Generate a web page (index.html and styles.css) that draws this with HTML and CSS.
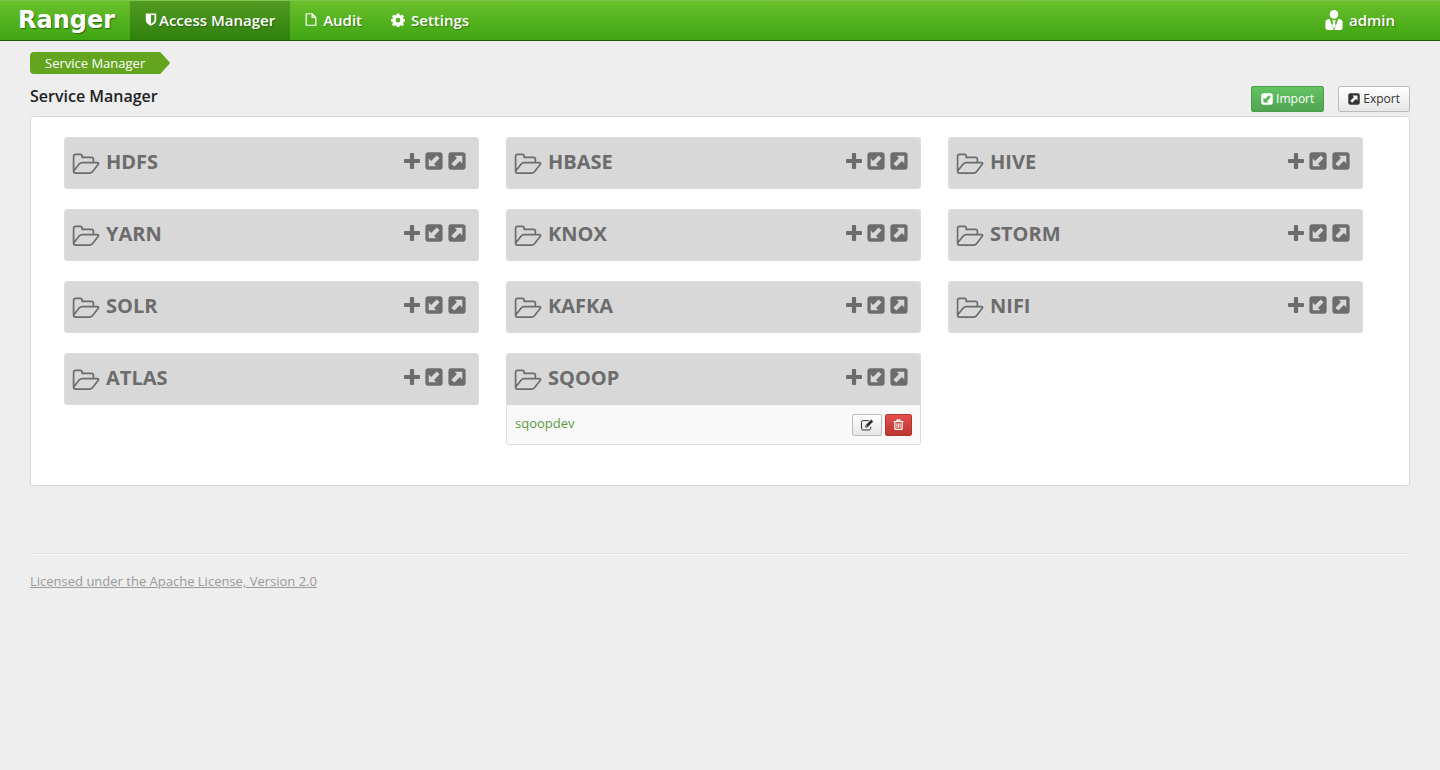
FILE: index.html
```html
<!DOCTYPE html>
<html lang="en">
<head>
<meta charset="utf-8">
<title>Ranger</title>
<link rel="stylesheet" href="styles.css">
</head>
<body>
<svg class="sprite" aria-hidden="true">
  <symbol id="i-shield" viewBox="0 0 12 14"><path fill="currentColor" fill-rule="evenodd" d="M.4.5h11.200v7.200c0 2.800-2.600 4.700-5.600 5.900C3 12.400.4 10.500.4 7.700zM6 2.200v9.400c2.200-.9 3.700-2.300 3.700-4.200V2.200z"/></symbol>
  <symbol id="i-file" viewBox="0 0 12 14"><path fill="none" stroke="currentColor" stroke-width="1.300" stroke-linejoin="round" d="M.8.8h6.400l4 4v8.400H.8zM7.200.8v4h4"/></symbol>
  <symbol id="i-gear" viewBox="0 0 14 14"><path fill="currentColor" fill-rule="evenodd" d="M5.700.4h2.600l.4 1.800.9.400 1.600-1 1.800 1.800-1 1.600.4.900 1.600.3v2.300l-1.600.4-.4.900 1 1.600-1.800 1.800-1.600-1-.9.400-.4 1.500H5.700l-.4-1.500-.9-.4-1.600 1L1 11.400l1-1.600-.4-.9L0 8.500V6.200l1.600-.3.400-.9-1-1.600 1.800-1.800 1.600 1 .9-.4zM7 4.800a2.400 2.400 0 1 0 0 4.800 2.400 2.400 0 0 0 0-4.800z"/></symbol>
  <symbol id="i-user" viewBox="0 0 18 20"><circle cx="9" cy="4.400" r="4.300" fill="currentColor"/><path fill="currentColor" d="M4.800 9 8.600 20H2.600Q.4 20 .4 18v-5.500q0-3.200 4.400-3.500zM13.200 9 9.400 20h6q2.200 0 2.200-2v-5.500q0-3.200-4.400-3.500zM7 9.900q2 .9 4 0L9.900 12l.8 3.600L9 19l-1.700-3.400L8.100 12z"/></symbol>
  <symbol id="i-folder" viewBox="0 0 28 22"><path fill="none" stroke="currentColor" stroke-width="1.700" stroke-linejoin="round" d="M1.600 18V3.400Q1.600 1.400 3.600 1.400h4.600q2 0 2 2v1h9.200q2 0 2 2v3.200M1.600 18l5.600-7q1.100-1.400 2.900-1.400h15q2.400 0 1 1.800l-5.400 7q-1.300 1.700-3.200 1.700H3.400Q1.600 20.100 1.600 18z"/></symbol>
  <symbol id="i-plus" viewBox="0 0 16 16"><path fill="currentColor" d="M6.900 0h2.200q1 0 1 1v4.900H15q1 0 1 1v2.200q0 1-1 1h-4.900V15q0 1-1 1H6.900q-1 0-1-1v-4.900H1q-1 0-1-1V6.900q0-1 1-1h4.900V1q0-1 1-1z"/></symbol>
  <symbol id="i-in" viewBox="0 0 18 18"><path fill="currentColor" fill-rule="evenodd" d="M3.400.3h11.200q3 0 3 3v11.400q0 3-3 3H3.400q-3 0-3-3V3.300q0-3 3-3zM3.700 6.600v7.700h7.700L9 11.900l5.600-5.600-2.900-2.900L6.100 9z"/></symbol>
  <symbol id="i-out" viewBox="0 0 18 18"><path fill="currentColor" fill-rule="evenodd" d="M3.400.3h11.200q3 0 3 3v11.400q0 3-3 3H3.400q-3 0-3-3V3.300q0-3 3-3zM6.600 3.700 9 6.100l-5.600 5.600 2.900 2.900L11.900 9l2.400 2.400V3.700z"/></symbol>
  <symbol id="i-edit" viewBox="0 0 13 12"><path fill="none" stroke="currentColor" stroke-width="1" d="M8.300 1.600H2.600Q1 1.600 1 3.200v6.200Q1 11 2.600 11h6q1.600 0 1.600-1.600V7.800"/><path fill="currentColor" fill-rule="evenodd" d="M10.700.6 12.700 2.600 6.900 8.400H4.800V6.400zM5.600 6.800v.8h.8l.5-.5-.8-.8z"/></symbol>
  <symbol id="i-trash" viewBox="0 0 12 12"><path fill="none" stroke="currentColor" stroke-width="1.300" d="M.6 2.700h10.800M4 2.700 4.500.9h3L8 2.700M2 2.700v7.700q0 1 1 1h6q1 0 1-1V2.700"/><path fill="none" stroke="currentColor" d="M4.200 4.600v5M6 4.600v5M7.800 4.600v5"/></symbol>
</svg>

<header class="topbar">
  <a class="brand" href="#">Ranger</a>
  <nav class="nav">
    <a class="nav-link nav-link-active" href="#"><svg class="icon-shield"><use href="#i-shield"/></svg>Access Manager</a>
    <a class="nav-link" href="#"><svg class="icon-file"><use href="#i-file"/></svg>Audit</a>
    <a class="nav-link" href="#"><svg class="icon-gear"><use href="#i-gear"/></svg>Settings</a>
  </nav>
  <a class="user" href="#"><svg class="icon-user"><use href="#i-user"/></svg>admin</a>
</header>

<main class="page">
  <nav class="crumbs" aria-label="Breadcrumb"><a class="crumb" href="#">Service Manager</a></nav>
  <div class="heading">
    <h1 class="title">Service Manager</h1>
    <div class="heading-actions">
      <button class="btn btn-green" type="button"><svg class="icon-btn"><use href="#i-in"/></svg>Import</button>
      <button class="btn btn-light" type="button"><svg class="icon-btn"><use href="#i-out"/></svg>Export</button>
    </div>
  </div>

  <section class="panel" id="services">
  </section>

  <footer class="footer"><a class="license" href="#">Licensed under the Apache License, Version 2.0</a></footer>
</main>
<script src="app.js"></script>
</body>
</html>
```

FILE: styles.css
```css
* { box-sizing: border-box; }

body {
  margin: 0;
  background: #eee;
  color: #222;
  font: 13px/20px "Open Sans", "Liberation Sans", sans-serif;
}

a { text-decoration: none; }
svg { display: block; flex: none; }
.sprite { position: absolute; width: 0; height: 0; }

.topbar {
  display: flex;
  height: 41px;
  padding-right: 45px;
  background: linear-gradient(#6abf2c, #3fa512);
  border-top: 1px solid #7cc64a;
  border-bottom: 1px solid #23570c;
  color: #fff;
  text-shadow: 1px 1px 1px rgba(0, 0, 0, 0.3);
}

.brand {
  width: 130px;
  padding-left: 18px;
  color: #fff;
  font: bold 24px/38px "DejaVu Sans", sans-serif;
  text-shadow: 1px 1px 1px rgba(0, 0, 0, 0.4);
}

.nav { display: flex; }

.nav-link, .user {
  display: flex;
  align-items: center;
  gap: 6px;
  padding: 0 14px 2px 15px;
  color: #fff;
  font-size: 15px;
  font-weight: 600;
}

.nav-link-active {
  gap: 2px;
  padding-right: 15px;
  background: linear-gradient(#529a22, #2f810d);
}

.user { margin-left: auto; padding: 0 0 2px; }

.icon-shield { width: 12px; height: 13px; }
.icon-file { width: 12px; height: 13px; }
.icon-gear { width: 14px; height: 14px; }
.icon-user { width: 18px; height: 20px; }

.page { padding: 11px 30px 0; }

.crumbs { display: flex; }

.crumb {
  padding: 1px 25px 1px 15px;
  background: #64a51f;
  color: #fff;
  border-radius: 4px 0 0 4px;
  clip-path: polygon(0 0, calc(100% - 10px) 0, 100% 50%, calc(100% - 10px) 100%, 0 100%);
}

.heading {
  display: flex;
  justify-content: space-between;
  padding: 12px 0 4px;
}

.title { margin: 0; font-size: 16px; line-height: 20px; font-weight: 600; }

.heading-actions { display: flex; gap: 14px; }

.btn {
  display: flex;
  align-items: center;
  justify-content: center;
  gap: 3px;
  height: 26px;
  padding: 0 9px;
  border: 1px solid #bbb;
  border-radius: 2px;
  font: 12px/20px "Open Sans", "Liberation Sans", sans-serif;
}

.btn-green { color: #fff; border-color: #4a9e4a; background: linear-gradient(#62c462, #51a351); }
.btn-light { color: #333; background: linear-gradient(#fff, #e6e6e6); }
.btn-red { color: #fff; border-color: #b3342f; background: linear-gradient(#e4504b, #bd362f); }
.btn-small { height: 22px; padding: 0 7px; }
.icon-btn { width: 12px; height: 12px; }

.panel {
  display: grid;
  grid-template-columns: repeat(3, 1fr);
  align-items: start;
  gap: 20px 27px;
  padding: 20px 46px 40px 33px;
  background: #fff;
  border: 1px solid #d6d6d6;
  border-radius: 3px;
}

.card {
  border: 1px solid #ddd;
  border-bottom: 0;
  border-radius: 3px;
  background: #f9f9f9;
  overflow: hidden;
}

.card-head {
  display: flex;
  align-items: center;
  gap: 6px;
  height: 51px;
  padding: 0 12px 3px 7px;
  background: #d8d8d8;
  color: #6c6c6c;
}

.card-title { margin: 0; font-size: 20px; line-height: 28px; font-weight: 700; }
.card-tools { display: flex; align-items: center; gap: 5px; margin: 0 0 2px auto; }

.tool { padding: 0; border: 0; background: none; color: inherit; }
.icon-folder { width: 28px; height: 22px; margin-top: 4px; }
.icon-plus { width: 16px; height: 16px; }
.icon-tool { width: 18px; height: 18px; }

.service {
  display: flex;
  align-items: center;
  gap: 3px;
  height: 40px;
  padding: 0 8px;
  border-bottom: 1px solid #ddd;
}

.service-name { margin: 0 auto 3px 0; color: #5b9b3a; }
.icon-edit { width: 14px; height: 12px; }
.icon-trash { width: 11px; height: 11px; }

.footer {
  margin-top: 67px;
  padding-top: 17px;
  border-top: 1px solid #e2e2e2;
  box-shadow: inset 0 1px #f6f6f6;
}

.license { color: #999; text-decoration: underline; }
```

FILE: app.js
```js
const services = [
  ["HDFS"], ["HBASE"], ["HIVE"], ["YARN"], ["KNOX"], ["STORM"],
  ["SOLR"], ["KAFKA"], ["NIFI"], ["ATLAS"], ["SQOOP", "sqoopdev"],
];

const row = (name) => `
  <div class="service">
    <a class="service-name" href="#">${name}</a>
    <button class="btn btn-light btn-small" type="button" aria-label="Edit ${name}"><svg class="icon-edit"><use href="#i-edit"/></svg></button>
    <button class="btn btn-red btn-small" type="button" aria-label="Delete ${name}"><svg class="icon-trash"><use href="#i-trash"/></svg></button>
  </div>`;

document.getElementById("services").innerHTML = services.map(([type, ...names]) => `
  <article class="card">
    <div class="card-head">
      <svg class="icon-folder"><use href="#i-folder"/></svg>
      <h2 class="card-title">${type}</h2>
      <div class="card-tools">
        <button class="tool" type="button" aria-label="Add ${type} service"><svg class="icon-plus"><use href="#i-plus"/></svg></button>
        <button class="tool" type="button" aria-label="Import ${type}"><svg class="icon-tool"><use href="#i-in"/></svg></button>
        <button class="tool" type="button" aria-label="Export ${type}"><svg class="icon-tool"><use href="#i-out"/></svg></button>
      </div>
    </div>${names.map(row).join("")}
  </article>`).join("");
```
